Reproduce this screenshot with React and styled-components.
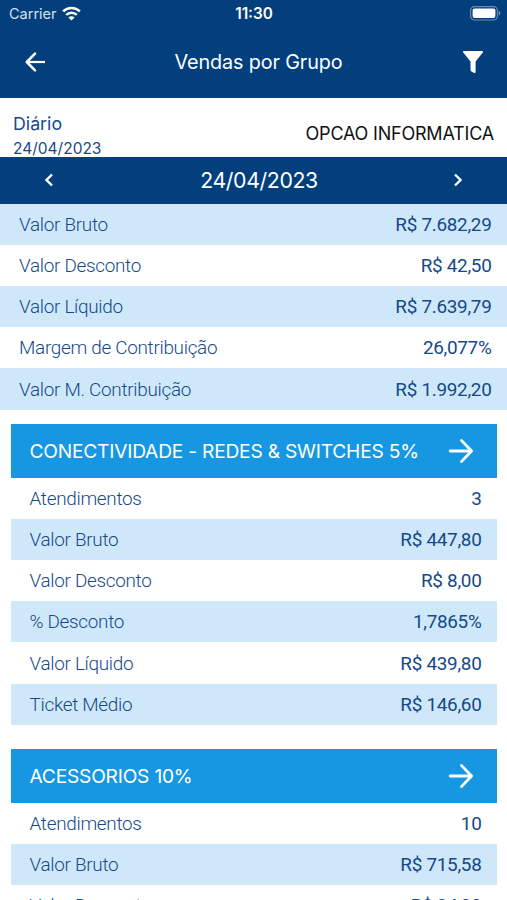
import React from 'react'
import styled, { createGlobalStyle } from 'styled-components'

const summary = [
    { label: 'Valor Bruto', value: 'R$ 7.682,29' },
    { label: 'Valor Desconto', value: 'R$ 42,50' },
    { label: 'Valor Líquido', value: 'R$ 7.639,79' },
    { label: 'Margem de Contribuição', value: '26,077%' },
    { label: 'Valor M. Contribuição', value: 'R$ 1.992,20' },
]

const groups = [
    {
        name: 'CONECTIVIDADE - REDES & SWITCHES 5%',
        rows: [
            { label: 'Atendimentos', value: '3' },
            { label: 'Valor Bruto', value: 'R$ 447,80' },
            { label: 'Valor Desconto', value: 'R$ 8,00' },
            { label: '% Desconto', value: '1,7865%' },
            { label: 'Valor Líquido', value: 'R$ 439,80' },
            { label: 'Ticket Médio', value: 'R$ 146,60' },
        ],
    },
    {
        name: 'ACESSORIOS 10%',
        rows: [
            { label: 'Atendimentos', value: '10' },
            { label: 'Valor Bruto', value: 'R$ 715,58' },
            { label: 'Valor Desconto', value: 'R$ 34,90' },
        ],
    },
]

const App = () => {
    return (
        <>
            <GlobalStyle />
            <Screen>
                <StatusBar>
                    <Carrier>
                        <CarrierName>Carrier</CarrierName>
                        <WifiIcon />
                    </Carrier>
                    <Clock>11:30</Clock>
                    <BatteryIcon />
                </StatusBar>
                <NavBar>
                    <IconButton aria-label="Voltar">
                        <BackIcon />
                    </IconButton>
                    <NavTitle>Vendas por Grupo</NavTitle>
                    <IconButton aria-label="Filtrar">
                        <FilterIcon />
                    </IconButton>
                </NavBar>
                <Info>
                    <Period>
                        <PeriodName>Diário</PeriodName>
                        <PeriodDate>24/04/2023</PeriodDate>
                    </Period>
                    <Company>OPCAO INFORMATICA</Company>
                </Info>
                <DateBar>
                    <IconButton aria-label="Dia anterior">
                        <Chevron d="M8 1.5 2.5 7 8 12.5" />
                    </IconButton>
                    <CurrentDate>24/04/2023</CurrentDate>
                    <IconButton aria-label="Próximo dia">
                        <Chevron d="M2 1.5 7.5 7 2 12.5" />
                    </IconButton>
                </DateBar>
                {summary.map((item, index) => (
                    <Row key={item.label} $shaded={index % 2 === 0}>
                        <Label>{item.label}</Label>
                        <Value>{item.value}</Value>
                    </Row>
                ))}
                <Groups>
                    {groups.map((group) => (
                        <Group key={group.name}>
                            <GroupHeader>
                                <GroupName>{group.name}</GroupName>
                                <ForwardIcon />
                            </GroupHeader>
                            {group.rows.map((item, index) => (
                                <Row key={item.label} $shaded={index % 2 === 1}>
                                    <Label>{item.label}</Label>
                                    <Value>{item.value}</Value>
                                </Row>
                            ))}
                        </Group>
                    ))}
                </Groups>
            </Screen>
        </>
    )
}

export default App

const WifiIcon = () => (
    <svg width="19" height="15" viewBox="0 0 19 15" fill="none" stroke="#fff" strokeWidth="2.6">
        <path d="M1.1 5.4a12 12 0 0 1 16.8 0" />
        <path d="M4.2 8.9a7.6 7.6 0 0 1 10.6 0" />
        <path d="M9.5 14.6 6.4 11.5a4.4 4.4 0 0 1 6.2 0z" fill="#fff" stroke="none" />
    </svg>
)

const BatteryIcon = () => (
    <svg width="31" height="15" viewBox="0 0 31 15">
        <rect x="0.6" y="0.6" width="26.8" height="13.4" rx="4" fill="none" stroke="#fff" strokeOpacity="0.4" strokeWidth="1.2" />
        <rect x="2.6" y="2.6" width="22.8" height="9.4" rx="2" fill="#fff" />
        <path d="M28.7 5v4.6a2.4 2.4 0 0 0 0-4.6z" fill="#fff" fillOpacity="0.45" />
    </svg>
)

const BackIcon = () => (
    <svg width="20" height="20" viewBox="0 0 20 20" fill="none" stroke="#fff" strokeWidth="2.5" strokeLinecap="round" strokeLinejoin="round">
        <path d="M10 1.7 1.8 10l8.2 8.3" />
        <path d="M2.5 10H19" strokeLinecap="square" strokeWidth="2.2" />
    </svg>
)

const ForwardIcon = () => (
    <svg width="26" height="26" viewBox="0 0 26 26" fill="none" stroke="#fff" strokeWidth="2.8" strokeLinecap="round" strokeLinejoin="round">
        <path d="M13.4 2.4 23.6 13 13.4 23.6" />
        <path d="M2.2 13h20.6" />
    </svg>
)

const FilterIcon = () => (
    <svg width="20" height="22" viewBox="0 0 20 22" fill="#fff">
        <path d="M.8 0h18.4c.7 0 1 .9.6 1.5l-7.2 8.9v10.7c0 .7-.6 1-1.2.8l-2.6-1.2a2.2 2.2 0 0 1-1.3-2v-8.3L.2 1.5C-.2.9.1 0 .8 0z" />
    </svg>
)

const Chevron = ({ d }) => (
    <svg width="10" height="14" viewBox="0 0 10 14" fill="none" stroke="#fff" strokeWidth="2.4">
        <path d={d} />
    </svg>
)

const GlobalStyle = createGlobalStyle`
    * {
        box-sizing: border-box;
    }

    body {
        margin: 0;
        background: #fff;
        font-family: Inter, "Liberation Sans", sans-serif;
    }
`

const Screen = styled.div`
    height: 900px;
    overflow: hidden;
    color: #15498a;
`

const StatusBar = styled.div`
    height: 27px;
    padding: 0 6px 0 9px;
    display: grid;
    grid-template-columns: 1fr auto 1fr;
    align-items: center;
    background: #023f7c;
    color: #fff;

    > svg {
        justify-self: end;
    }
`

const Carrier = styled.div`
    display: flex;
    align-items: center;
    gap: 5px;
`

const CarrierName = styled.span`
    font-size: 14.5px;
    color: #d6e2ee;
`

const Clock = styled.span`
    margin-right: 2px;
    font-size: 15.3px;
    font-weight: 600;
`

const NavBar = styled.header`
    height: 71px;
    padding: 0 24px 2px 25px;
    display: flex;
    align-items: center;
    justify-content: space-between;
    background: #023f7c;
    color: #fff;
`

const IconButton = styled.button`
    display: flex;
    padding: 0;
    border: 0;
    background: none;
`

const NavTitle = styled.h1`
    margin: 0 0 0 9px;
    font-size: 19.8px;
    font-weight: 400;
    letter-spacing: -0.12px;
`

const Info = styled.div`
    height: 59px;
    padding: 0 13px;
    display: flex;
    justify-content: space-between;
    align-items: center;
`

const Period = styled.div`
    display: flex;
    flex-direction: column;
    padding-top: 16px;
`

const PeriodName = styled.span`
    font-size: 17.8px;
    line-height: 26px;
`

const PeriodDate = styled.span`
    font-size: 15.5px;
    line-height: 24px;
`

const Company = styled.span`
    padding-top: 11px;
    font-size: 18px;
    letter-spacing: -0.2px;
    color: #111;
`

const DateBar = styled.div`
    height: 46.6px;
    padding: 0 44px;
    display: flex;
    justify-content: space-between;
    align-items: center;
    background: #023f7c;
    color: #fff;
`

const CurrentDate = styled.span`
    margin-left: 11px;
    font-size: 21.3px;
    letter-spacing: -0.4px;
`

const Row = styled.div`
    height: 41.2px;
    padding: 0.2px 15.5px 0 19px;
    display: flex;
    justify-content: space-between;
    align-items: center;
    background: ${({ $shaded }) => ($shaded ? '#cfe8f9' : '#fff')};
    font-family: Roboto, "Liberation Sans", sans-serif;
    font-size: 18.9px;
`

const Label = styled.span`
    font-weight: 300;
    letter-spacing: -0.29px;
`

const Value = styled.span`
    font-weight: 400;
    letter-spacing: -0.29px;
`

const Groups = styled.div`
    padding: 14.4px 10.5px 0 11px;
    display: flex;
    flex-direction: column;
    gap: 24px;
`

const Group = styled.section`
    display: flex;
    flex-direction: column;

    ${Row} {
        padding: 0.2px 15px 0 18.5px;
    }
`

const GroupHeader = styled.div`
    height: 53.8px;
    padding: 1px 22.5px 0 18.5px;
    display: flex;
    justify-content: space-between;
    align-items: center;
    background: #1797e2;
    color: #fff;
`

const GroupName = styled.h2`
    margin: 0;
    font-size: 19.2px;
    font-weight: 400;
    letter-spacing: -0.22px;
`
